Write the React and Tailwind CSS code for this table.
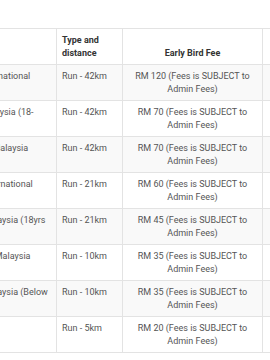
import React from 'react';

const ROWS = [
  { cat: ['Full Marathon - International'], type: 'Run - 42km', fee: 'RM 120' },
  { cat: ['Full Marathon - Malaysia (18-', '49yrs)'], type: 'Run - 42km', fee: 'RM 70' },
  { cat: ['Full Marathon - All Malaysia'], type: 'Run - 42km', fee: 'RM 70' },
  { cat: ['Half Marathon - International'], type: 'Run - 21km', fee: 'RM 60' },
  { cat: ['Half Marathon - Malaysia (18yrs', '& above)'], type: 'Run - 21km', fee: 'RM 45' },
  { cat: ['10km Fun Run - All Malaysia'], type: 'Run - 10km', fee: 'RM 35' },
  { cat: ['10km Fun Run - Malaysia (Below', '18yrs)'], type: 'Run - 10km', fee: 'RM 35' },
  { cat: ['5km Family Run'], type: 'Run - 5km', fee: 'RM 20' },
];

const cell = 'border border-[#e3e3e3] px-[5px] py-[5px] align-top';
const head = 'border border-[#e3e3e3] px-[5px] py-[5px] align-bottom font-bold text-[#333]';

export default function App() {
  return (
    <div
      className="w-[270px] h-[360px] overflow-hidden bg-white pt-[28px] text-[9px] leading-[12.5px] text-[#555]"
      style={{ fontFamily: 'Roboto, "Liberation Sans", sans-serif' }}
    >
      <table className="-ml-[88px] w-[487px] table-fixed border-collapse">
        <colgroup>
          <col className="w-[144px]" />
          <col className="w-[66px]" />
          <col className="w-[140px]" />
          <col className="w-[137px]" />
        </colgroup>
        <thead>
          <tr className="bg-white">
            <th className={`${head} text-left`}>Category</th>
            <th className={`${head} text-left`}>
              Type and
              <br />
              distance
            </th>
            <th className={`${head} text-center`}>Early Bird Fee</th>
            <th className={`${head} text-center`}>Normal Fee</th>
          </tr>
        </thead>
        <tbody>
          {ROWS.map((r, i) => (
            <tr key={i} className={i % 2 === 0 ? 'bg-[#f9f9f9]' : 'bg-white'}>
              <td className={`${cell} whitespace-nowrap`}>
                {r.cat.map((line, j) => (
                  <div key={j}>{line}</div>
                ))}
              </td>
              <td className={cell}>{r.type}</td>
              <td className={`${cell} text-center`}>
                {r.fee} (Fees is SUBJECT to
                <br />
                Admin Fees)
              </td>
              <td className={`${cell} text-center whitespace-nowrap`}>
                {r.fee} (Fees is SUBJECT to
                <br />
                Admin Fees)
              </td>
            </tr>
          ))}
        </tbody>
      </table>
    </div>
  );
}
